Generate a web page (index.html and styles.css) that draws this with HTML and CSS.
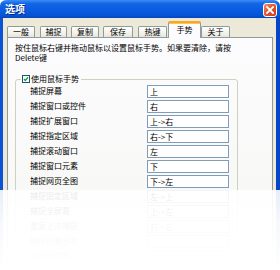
FILE: index.html
```html
<!DOCTYPE html>
<html lang="zh-CN">
<head>
<meta charset="utf-8">
<title>选项</title>
<link rel="stylesheet" href="styles.css">
</head>
<body>
<div class="window">
	<div class="titlebar">
		<span class="title">选项</span>
		<span class="close">
			<svg width="14" height="14" viewBox="0 0 14 14">
				<path d="M4 4 L10 10 M10 4 L4 10" stroke="#fff" stroke-width="1.8" stroke-linecap="square" />
			</svg>
		</span>
	</div>
	<div class="frame">
		<div class="tabs">
			<div class="tab t1">一般</div>
			<div class="tab t2">捕捉</div>
			<div class="tab t3">复制</div>
			<div class="tab t4">保存</div>
			<div class="tab t5">热键</div>
			<div class="tab active">手势</div>
			<div class="tab t7">关于</div>
		</div>
		<div class="panel">
			<p class="hint">按住鼠标右键并拖动鼠标以设置鼠标手势。如果要清除，请按<br />Delete键</p>
			<fieldset class="group">
				<legend>
					<span class="check">
						<svg width="8" height="8" viewBox="0 0 8 8">
							<rect x="0.5" y="0.5" width="7" height="7" fill="#fff" stroke="#1c5180" />
							<path d="M2 4 L3.4 5.5 L6 2.3" fill="none" stroke="#21a121" stroke-width="1.4" />
						</svg>
					</span>使用鼠标手势
				</legend>
				<div class="rows">
					<span class="label">捕捉屏幕</span><span class="field">上</span>
					<span class="label">捕捉窗口或控件</span><span class="field">右</span>
					<span class="label">捕捉扩展窗口</span><span class="field">上-&gt;右</span>
					<span class="label">捕捉指定区域</span><span class="field">右-&gt;下</span>
					<span class="label">捕捉滚动窗口</span><span class="field">左</span>
					<span class="label">捕捉窗口元素</span><span class="field">下</span>
					<span class="label">捕捉网页全图</span><span class="field">下-&gt;左</span>
					<span class="label">捕捉固定区域</span><span class="field">左-&gt;上</span>
					<span class="label">捕捉全屏幕</span><span class="field">上-&gt;左</span>
					<span class="label">重复上次捕捉</span><span class="field">右-&gt;左</span>
					<span class="label">捕捉任意形状</span><span class="field"></span>
					<span class="label">打开编辑器</span><span class="field"></span>
				</div>
			</fieldset>
		</div>
	</div>
	<div class="fade"></div>
</div>
</body>
</html>
```

FILE: styles.css
```css
body {
	margin: 0px;
	background: #fff;
	font-family: "Noto Sans CJK SC", "DejaVu Sans", sans-serif;
	font-size: 8px;
	color: #000;
}

div.window {
	position: relative;
	width: 280px;
	height: 270px;
	overflow: hidden;
	display: flex;
	flex-direction: column;
}

div.titlebar {
	height: 18px;
	flex: none;
	display: flex;
	align-items: center;
	justify-content: space-between;
	padding: 0px 3px 0px 5px;
	background: linear-gradient(#3d8ef5 0%, #1266e6 20%, #0a5ce0 55%, #0654d6 85%, #0345bd 100%);
	border-radius: 6px 6px 0px 0px;
}

span.title {
	color: #fff;
	font-weight: bold;
	font-size: 10px;
	line-height: 12px;
	text-shadow: 1px 1px 0px #0a2a8a;
}

span.close {
	width: 14px;
	height: 14px;
	display: block;
	margin-top: 1px;
	border: 1px solid #fff;
	border-radius: 3px;
	box-sizing: border-box;
	background: linear-gradient(135deg, #f09070 0%, #e2552c 45%, #cc3d14 100%);
}

span.close svg {
	display: block;
	margin: -1px;
}

div.frame {
	flex: 1;
	display: flex;
	flex-direction: column;
	background: #ece9d8;
	border-left: 3px solid #0a52d8;
	border-right: 4px solid #0645c8;
	padding: 5px 3px 0px 4px;
}

div.tabs {
	display: flex;
	align-items: flex-end;
	height: 14px;
	flex: none;
	position: relative;
	z-index: 1;
}

div.tab {
	height: 10px;
	line-height: 10px;
	text-align: center;
	border: 1px solid #919b9c;
	border-bottom: none;
	border-radius: 2px 2px 0px 0px;
	background: linear-gradient(#ffffff, #f0efe8 70%, #e6e4da);
	margin-right: 4px;
}

div.t1 { width: 26px; margin-right: 5px; }
div.t2 { width: 25px; }
div.t3 { width: 26px; }
div.t4 { width: 28px; margin-right: 5px; }
div.t5 { width: 27px; margin-right: 0px; }
div.t7 { width: 27px; }

div.tab.active {
	width: 31px;
	height: 14px;
	line-height: 14px;
	margin: 0px 0px -1px 1px;
	padding-bottom: 1px;
	background: #fcfcfe;
	border-top: 2px solid #f5a82a;
	box-shadow: inset 0px 1px 0px #ffc83c;
}

div.panel {
	flex: 1;
	border: 1px solid #919b9c;
	border-bottom: none;
	background: linear-gradient(#fcfcfe, #f6f6f3);
	padding: 5px 0px 0px 7px;
}

p.hint {
	margin: 0px;
	line-height: 10px;
}

fieldset.group {
	margin: 11px 0px 0px 0px;
	padding: 1px 0px 0px 5px;
	border: 1px solid #d0d0bf;
	border-radius: 3px;
	box-sizing: border-box;
	width: 223px;
	min-width: 0px;
}

legend {
	padding: 0px 2px 0px 1px;
	line-height: 10px;
	height: 10px;
	display: flex;
	align-items: center;
}

span.check {
	width: 8px;
	height: 8px;
	display: block;
	margin-right: 1px;
}

span.check svg {
	display: block;
}

div.rows {
	display: grid;
	grid-template-columns: 117px 82px;
	grid-auto-rows: 13px;
	row-gap: 2px;
	margin-left: 9px;
}

span.label {
	line-height: 13px;
	margin-top: -1px;
}

span.field {
	border: 1px solid #7f9db9;
	background: #fff;
	line-height: 11px;
	padding-left: 2px;
}

div.fade {
	position: absolute;
	left: 0px;
	right: 0px;
	top: 190px;
	bottom: 0px;
	background: linear-gradient(rgba(255, 255, 255, 0.9) 0%, rgba(255, 255, 255, 0.96) 40%, #fff 100%);
}
```
